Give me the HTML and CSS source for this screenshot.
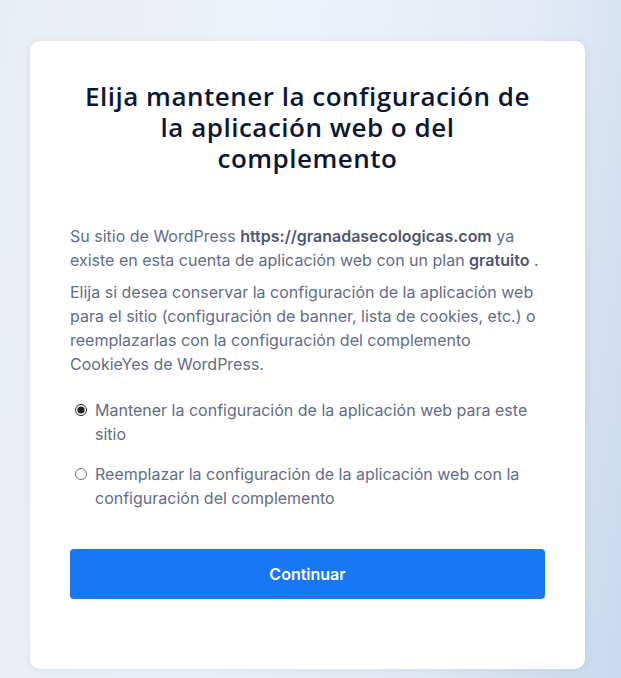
FILE: index.html
```html
<!DOCTYPE html>
<html>
<head>
	<meta charset="UTF-8">
	<title>Elija mantener la configuración</title>
<link rel="stylesheet" href="styles.css">
</head>
<body>
<div class="page">
	<div class="card">
		<h1 class="title">Elija mantener la configuración de la aplicación web o del complemento</h1>
		<p class="text">Su sitio de WordPress <strong>https://granadasecologicas.com</strong> ya existe en esta cuenta de aplicación web con un plan <strong>gratuito</strong> .</p>
		<p class="text">Elija si desea conservar la configuración de la aplicación web para el sitio (configuración de banner, lista de cookies, etc.) o reemplazarlas con la configuración del complemento CookieYes de WordPress.</p>
		<div class="options">
			<label class="option"><input type="radio" name="keep" checked><span>Mantener la configuración de la aplicación web para este sitio</span></label>
			<label class="option"><input type="radio" name="keep"><span>Reemplazar la configuración de la aplicación web con la configuración del complemento</span></label>
		</div>
		<button class="btn">Continuar</button>
	</div>
</div>
</body>
</html>
```
FILE: styles.css
```css
html,body{margin:0;height:100%;}
body{font-family:Inter,"Noto Sans",sans-serif;background:linear-gradient(100deg,#e9eef2 0%,#eef2fa 40%,#e4ebf6 72%,#c9d9ee 100%);}
.page{padding:41px 36px 10px 30px;}
.card{background:#fff;border-radius:10px;box-shadow:0 2px 10px rgba(90,110,140,.12);padding:40px 40px 70px;width:475px;}
.title{margin:0 auto 50px;max-width:462px;text-align:center;font-family:"Open Sans",sans-serif;font-weight:600;font-size:26px;line-height:31px;color:#0c1733;letter-spacing:.5px;}
.text{margin:0 0 8px;font-size:16px;line-height:24px;color:#646c86;}
.text strong{font-weight:600;color:#4f5670;}
.options{margin-top:22px;display:flex;flex-direction:column;gap:16px;}
.option{display:flex;align-items:flex-start;font-size:16px;line-height:24px;color:#646c86;}
.option input{margin:6px 8px 0 5px;width:12px;height:12px;accent-color:#222;flex:none;}
.btn{margin-top:39px;display:block;width:100%;height:50px;border:0;border-radius:4px;background:#1877f2;color:#fff;font-family:Inter,sans-serif;font-weight:600;font-size:16px;}
```
